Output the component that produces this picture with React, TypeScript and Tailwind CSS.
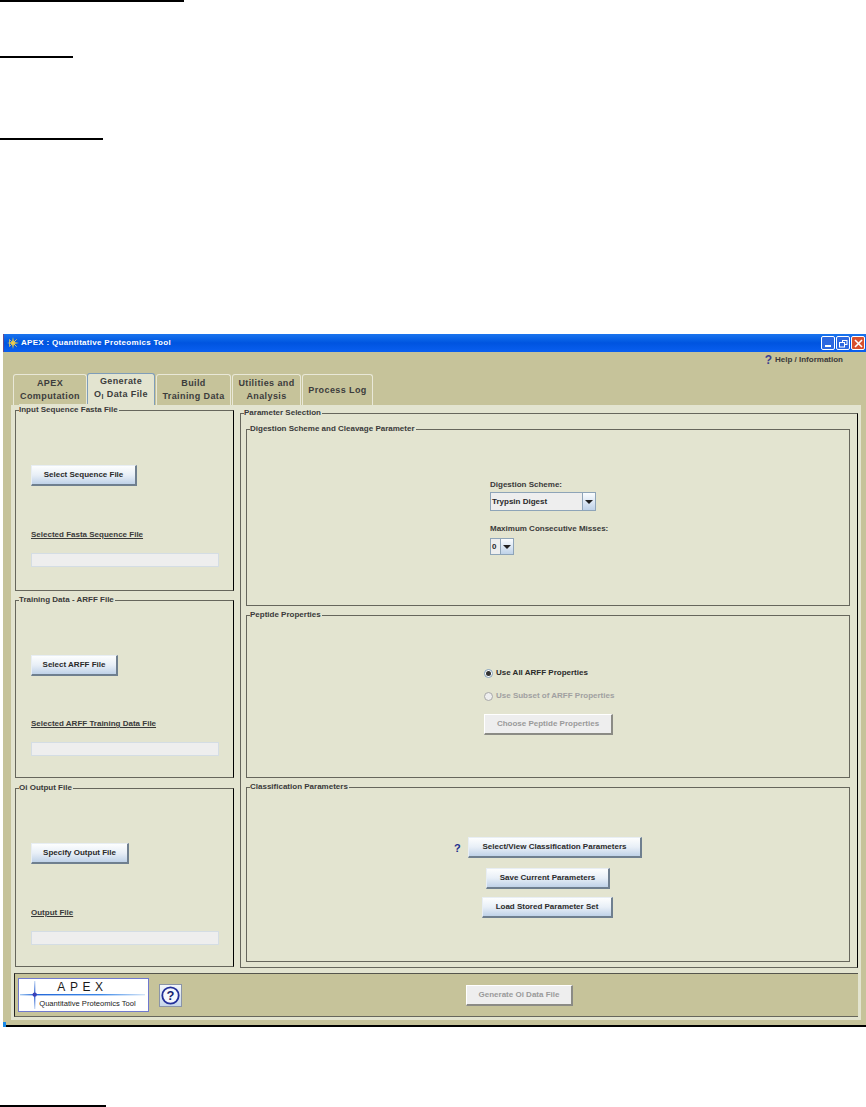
import React from "react";

const font = "font-['Liberation_Sans',Arial,sans-serif]";
const blueBtn = "flex items-center justify-center border-t border-l border-[#e8eef4] border-r-2 border-b-2 border-r-[#6f7f8f] border-b-[#6f7f8f] bg-gradient-to-b from-[#fdfefe] via-[#e8eff7] to-[#c0d2e8] text-[8px] font-bold text-[#2a2a2a] whitespace-nowrap";
const grayBtn = "flex items-center justify-center border-t border-l border-[#ffffff] border-r-2 border-b-2 border-r-[#8b8b85] border-b-[#8b8b85] bg-[#eeeeee] text-[8px] font-bold text-[#9a9a9a] whitespace-nowrap";

function Box({ title, className, children }: { title: string; className: string; children?: React.ReactNode }) {
  return (
    <div className={`relative border border-[#66665c] ${className}`}>
      <span className="absolute -top-[7px] left-[3px] bg-[#e3e4d0] pr-[1px] text-[8px] leading-[12px] font-bold text-[#3a3a3a] whitespace-nowrap">{title}</span>
      {children}
    </div>
  );
}

function FileBox({ title, btn, btnW, label, className, gap }: { title: string; btn: string; btnW: string; label: string; className: string; gap: string }) {
  return (
    <Box title={title} className={`border-r-black pl-[15px] pt-[54px] ${className}`}>
      <div className={`${blueBtn} ${btnW} h-[21px]`}>{btn}</div>
      <div className={`${gap} text-[8px] leading-[12px] font-bold text-[#3a3a3a] underline underline-offset-1 whitespace-nowrap`}>{label}</div>
      <div className="mt-[12px] h-[14px] w-[188px] border border-[#d4dde4] bg-[#eeeeee]" />
    </Box>
  );
}

function Tab({ className, selected, children }: { className: string; selected?: boolean; children: React.ReactNode }) {
  return (
    <div className={`flex flex-col items-center justify-center rounded-t-[3px] border-t border-l border-r text-[9px] leading-[13px] font-bold tracking-[0.4px] text-[#3c3c3c] ${selected ? "h-[32px] border-[#7f9db9] bg-[#e3e4d0] pb-[3px]" : "h-[31px] border-[#e9e8d8] bg-[#c6c39a]"} ${className}`}>
      {children}
    </div>
  );
}

function Combo({ w, text, arrowW }: { w: string; text: string; arrowW: string }) {
  return (
    <div className={`flex border border-[#8ea4b8] ${w}`}>
      <div className="flex min-w-0 flex-1 items-center bg-[#eeeeee] pl-[1px] text-[8px] font-bold text-[#2a2a2a] whitespace-nowrap">{text}</div>
      <div className={`flex items-center justify-center border-l border-[#8ea4b8] bg-gradient-to-b from-[#fbfdff] to-[#bfd2e8] ${arrowW}`}>
        <svg width="8" height="4" viewBox="0 0 8 4"><path d="M0 0h8L4 4z" fill="#222" /></svg>
      </div>
    </div>
  );
}

function Radio({ on, label }: { on?: boolean; label: string }) {
  return (
    <div className={`flex items-center gap-[3px] text-[8px] leading-[12px] font-bold ${on ? "text-[#2a2a2a]" : "text-[#a0a0a0]"}`}>
      <span className={`flex h-[9px] w-[9px] items-center justify-center rounded-full border ${on ? "border-[#7f9db9] bg-white" : "border-[#a8a8a8] bg-[#eeeeee]"}`}>
        {on && <span className="h-[5px] w-[5px] rounded-full bg-[#333]" />}
      </span>
      {label}
    </div>
  );
}

function Logo() {
  return (
    <div className="relative flex h-[34px] w-[131px] flex-col items-center border border-[#6f78cf] bg-white">
      <div className="mt-[2px] pr-[2px] text-[12px] leading-[12px] tracking-[4.6px] text-[#1a1a1a] font-normal">APEX</div>
      <div className="mt-[6px] pl-[8px] text-[7.6px] leading-[10px] font-normal text-[#222] whitespace-nowrap">Quantitative Proteomics Tool</div>
      <svg className="absolute left-0 top-0" width="129" height="32" viewBox="0 0 129 32">
        <defs>
          <linearGradient id="h" x1="0" x2="1" y1="0" y2="0">
            <stop offset="0" stopColor="#a9ccf2" />
            <stop offset="0.12" stopColor="#2468d8" />
            <stop offset="0.65" stopColor="#3c88e8" />
            <stop offset="1" stopColor="#d6e6f8" />
          </linearGradient>
          <linearGradient id="v" x1="0" x2="0" y1="0" y2="1">
            <stop offset="0" stopColor="#cfe0f6" />
            <stop offset="0.5" stopColor="#2a5ed0" />
            <stop offset="1" stopColor="#cfe0f6" />
          </linearGradient>
        </defs>
        <rect x="1" y="15" width="125" height="1.4" fill="url(#h)" />
        <rect x="15" y="2" width="1.4" height="28" fill="url(#v)" />
        <circle cx="15.7" cy="15.6" r="2.2" fill="#3a40b8" />
      </svg>
    </div>
  );
}

export default function App() {
  return (
    <div className={`flex h-[1107px] w-[866px] flex-col overflow-hidden bg-white ${font}`}>
      <div className="h-[2px] w-[184px] shrink-0 bg-black" />
      <div className="mt-[54px] h-[2px] w-[73px] shrink-0 bg-black" />
      <div className="mt-[80px] h-[2px] w-[103px] shrink-0 bg-black" />

      <div className="relative ml-[3px] mt-[194px] flex h-[693px] w-[863px] shrink-0 flex-col bg-[#c6c39a]">
        {/* title bar */}
        <div className="flex h-[18px] shrink-0 items-center border-l border-l-[#6a4a8a] bg-gradient-to-b from-[#1a74ee] via-[#0054e0] to-[#0a5ff0] pl-[3px] pr-[1px]">
          <svg width="12" height="12" viewBox="0 0 12 12">
            <path d="M6 0 7 5 12 6 7 7 6 12 5 7 0 6 5 5z" fill="#f2d23a" />
            <path d="M2.5 2.5 6 6 9.5 2.5 6 6 9.5 9.5 6 6 2.5 9.5z" stroke="#e8c860" strokeWidth="0.8" fill="none" />
          </svg>
          <span className="ml-[2px] text-[8px] font-bold tracking-[0.3px] text-white">APEX : Quantitative Proteomics Tool</span>
          <div className="ml-auto flex gap-[1px]">
            <div className="flex h-[14px] w-[14px] items-end justify-start rounded-[2px] border border-white bg-[#2d68e0] pb-[2px] pl-[3px]">
              <span className="h-[2px] w-[6px] bg-white" />
            </div>
            <div className="flex h-[14px] w-[14px] items-center justify-center rounded-[2px] border border-white bg-[#2d68e0]">
              <svg width="9" height="9" viewBox="0 0 9 9" fill="none" stroke="white"><rect x="3.5" y="1.5" width="4.5" height="4" /><rect x="0.5" y="3.5" width="5" height="4.5" fill="#2d68e0" /></svg>
            </div>
            <div className="flex h-[14px] w-[14px] items-center justify-center rounded-[2px] border border-white bg-[#d8502e]">
              <svg width="9" height="9" viewBox="0 0 9 9" stroke="white" strokeWidth="1.6"><path d="M1 1l7 7M8 1 1 8" /></svg>
            </div>
          </div>
        </div>

        {/* help line */}
        <div className="flex h-[14px] shrink-0 items-center justify-end pr-[23px] pt-[1px] text-[8px] font-bold text-[#3a3a3a]">
          <span className="mr-[3px] text-[12px] leading-[12px] text-[#3a3f8f]">?</span>
          Help / Information
        </div>

        {/* tabs */}
        <div className="ml-[10px] mt-[7px] flex h-[32px] shrink-0 items-end">
          <Tab className="w-[74px]">
            <span>APEX</span>
            <span>Computation</span>
          </Tab>
          <Tab selected className="w-[68px]">
            <span>Generate</span>
            <span>
              O<sub className="text-[7px] leading-none">I</sub> Data File
            </span>
          </Tab>
          <Tab className="ml-[1px] w-[75px]">
            <span>Build</span>
            <span>Training Data</span>
          </Tab>
          <Tab className="ml-[1px] w-[69px]">
            <span>Utilities and</span>
            <span>Analysis</span>
          </Tab>
          <Tab className="ml-[1px] w-[71px]">Process Log</Tab>
        </div>

        {/* panel */}
        <div className="ml-[8px] flex h-[615px] w-[850px] shrink-0 flex-col bg-[#e3e4d0] pl-[4px] pt-[5px]">
          <div className="flex h-[558px] shrink-0">
            <div className="flex w-[219px] shrink-0 flex-col">
              <FileBox title="Input Sequence Fasta File" btn="Select Sequence File" btnW="w-[106px]" label="Selected Fasta Sequence File" className="h-[181px]" gap="mt-[43px]" />
              <FileBox title="Training Data - ARFF File" btn="Select ARFF File" btnW="w-[87px]" label="Selected ARFF Training Data File" className="mt-[9px] h-[178px]" gap="mt-[42px]" />
              <FileBox title="Oi Output File" btn="Specify Output File" btnW="w-[98px]" label="Output File " className="mt-[10px] h-[179px]" gap="mt-[43px]" />
            </div>

            <Box title="Parameter Selection" className="ml-[6px] mt-[3px] h-[555px] w-[618px] border-r-black pl-[5px] pr-[7px] pt-[15px]">
              <Box title="Digestion Scheme and Cleavage Parameter" className="h-[177px] pl-[243px] pt-[49px]">
                <div className="text-[8px] leading-[12px] font-bold text-[#3a3a3a]">Digestion Scheme:</div>
                <div className="mt-[1px]"><Combo w="h-[19px] w-[106px]" text="Trypsin Digest" arrowW="w-[13px]" /></div>
                <div className="mt-[12px] text-[8px] leading-[12px] font-bold text-[#3a3a3a]">Maximum Consecutive Misses:</div>
                <div className="mt-[3px]"><Combo w="h-[17px] w-[24px]" text="0" arrowW="w-[13px]" /></div>
              </Box>
              <Box title="Peptide Properties" className="mt-[9px] h-[163px] pl-[237px] pt-[51px]">
                <Radio on label="Use All ARFF Properties" />
                <div className="mt-[11px]"><Radio label="Use Subset of ARFF Properties" /></div>
                <div className={`${grayBtn} mt-[12px] h-[21px] w-[129px]`}>Choose Peptide Properties</div>
              </Box>
              <Box title="Classification Parameters" className="mt-[9px] h-[175px] pt-[49px]">
                <div className="flex flex-col pl-[221px]">
                  <div className="relative">
                    <span className="absolute -left-[14px] top-[4px] text-[11px] leading-[14px] font-bold text-[#1c2e8c]">?</span>
                    <div className={`${blueBtn} h-[21px] w-[174px]`}>Select/View Classification Parameters</div>
                  </div>
                </div>
                <div className={`${blueBtn} ml-[239px] mt-[10px] h-[21px] w-[124px]`}>Save Current Parameters</div>
                <div className={`${blueBtn} ml-[235px] mt-[8px] h-[21px] w-[131px]`}>Load Stored Parameter Set</div>
              </Box>
            </Box>
          </div>

          {/* bottom bar */}
          <div className="ml-[-1px] mt-[5px] flex h-[44px] w-[844px] shrink-0 items-center border-t border-l border-b border-t-[#55554c] border-l-[#222] border-b-[#66665c] bg-[#c6c39a] pl-[3px]">
            <Logo />
            <div className="ml-[10px] flex h-[23px] w-[23px] items-center justify-center border border-[#8a94a8] bg-gradient-to-b from-[#f4f7fb] to-[#c6d6ea]">
              <svg width="19" height="19" viewBox="0 0 19 19">
                <circle cx="9.5" cy="9.5" r="8.2" fill="#f6f8fc" stroke="#23309a" strokeWidth="1.8" />
                <text x="9.5" y="14.2" textAnchor="middle" fontSize="13" fontWeight="700" fill="#161f6e" fontFamily="Liberation Sans, Arial, sans-serif">?</text>
              </svg>
            </div>
            <div className={`${grayBtn} ml-[284px] h-[21px] w-[107px]`}>Generate Oi Data File</div>
          </div>
        </div>

        <div className="mt-auto h-[2px] shrink-0 bg-black" />
        <span className="absolute bottom-0 left-0 h-[5px] w-[3px] bg-[#1a8ae8]" />
      </div>

      <div className="mt-[78px] h-[2px] w-[106px] shrink-0 bg-black" />
    </div>
  );
}
